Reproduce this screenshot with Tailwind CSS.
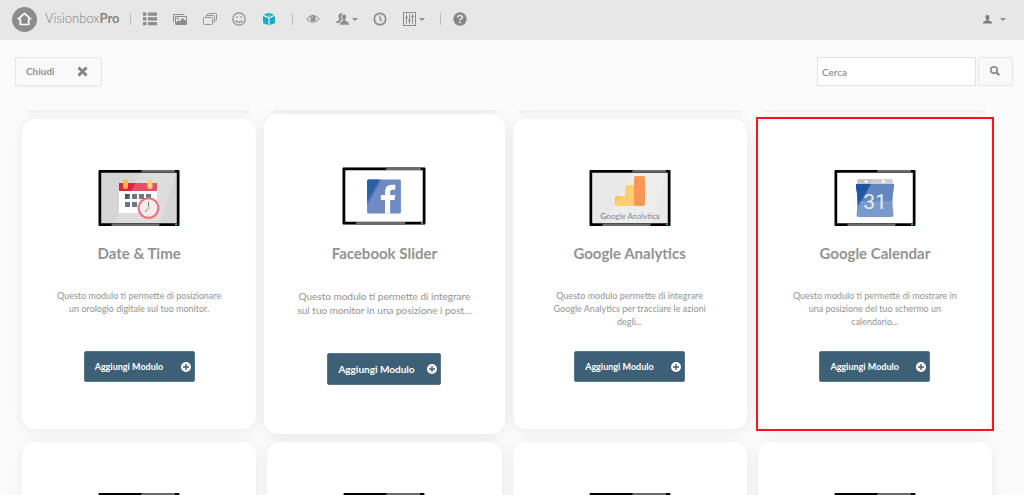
<!DOCTYPE html>
<html lang="it">
<head>
<meta charset="utf-8">
<meta name="viewport" content="width=device-width, initial-scale=1">
<title>VisionboxPro</title>
<script src="https://cdn.jsdelivr.net/npm/@tailwindcss/browser@4"></script>
</head>
<body class="h-screen overflow-hidden flex flex-col bg-[#fbfbfb] font-['Lato',sans-serif] text-[#939393]">

<svg class="hidden" aria-hidden="true">
  <symbol id="frame" viewBox="0 0 82 56">
    <path fill="#000" fill-rule="evenodd" d="M1.500 0h79q1 0 1 1v54q0 1-1 1h-79q-1 0-1-1V1q0-1 1-1zM3.200 2.800v50.400h75.600V2.800z"/>
    <path fill="#fff" fill-opacity=".2" d="M43 3h35L62 53H16z"/>
    <path fill="#6a6a6a" d="M44 0h33v2.500H42.500zM14 53.500h48l-1 2.500H13z"/>
    <circle cx="78" cy="54.500" r="1" fill="#1db4e8"/>
  </symbol>
  <symbol id="plus" viewBox="0 0 10 10">
    <circle cx="5" cy="5" r="5" fill="#fff"/>
    <path d="M5 2v6M2 5h6" stroke="#3d6077" stroke-width="1.400"/>
  </symbol>
  <symbol id="caret" viewBox="0 0 6 3"><path fill="currentColor" d="M0 0h6L3 3z"/></symbol>
</svg>

<header class="h-10 shrink-0 bg-[#e7e7e7] flex items-center pl-3 pr-[18px] pb-0.5">
  <a href="#" class="flex items-center gap-2" aria-label="VisionboxPro">
    <svg class="size-[25px]" viewBox="0 0 25 25" fill="none"><circle cx="12.500" cy="12.500" r="12.500" fill="#8c8c8c"/><path d="M5.800 12.400 12.500 6.300l6.700 6.100M8.300 11.500v6h8.400v-6" stroke="#fff" stroke-width="1.700"/></svg>
    <span class="text-[13px] font-light text-[#7c7c7c]">Visionbox<b class="font-bold text-[#858585]">Pro</b></span>
  </a>
  <span class="w-px h-3 bg-[#bdbdbd] ml-[10px]"></span>
  <nav class="flex items-center flex-1" aria-label="Principale">
    <a href="#" class="ml-3" aria-label="Elenco"><svg class="w-[14px] h-[14px]" viewBox="0 0 14 14" fill="#8c8c8c"><path d="M0 .5h3.500v3.300H0zM5 .5h9v3.300H5zM0 5.300h3.500v3.300H0zM5 5.300h9v3.300H5zM0 10h3.500v3.300H0zM5 10h9v3.300H5z"/></svg></a>
    <a href="#" class="ml-4" aria-label="Immagini"><svg class="w-[14px] h-[14px]" viewBox="0 0 14 14" fill="none" stroke="#8c8c8c"><path d="M.5 10V2.500h11M2.500 4.500h11v8h-11z"/><path d="M3 12v-1.500l2-2 1.500 1 3-3.500L13 9v3z" fill="#8c8c8c" stroke="none"/><circle cx="4.800" cy="6.500" r="1" fill="#8c8c8c" stroke="none"/></svg></a>
    <a href="#" class="ml-4" aria-label="Livelli"><svg class="w-[14px] h-[14px]" viewBox="0 0 14 14" fill="none" stroke="#949494"><rect x=".5" y="5.500" width="9" height="7" rx="1"/><path d="M2.500 5V4.500q0-1 1-1h7q1 0 1 1v5q0 1-1 1H10M4.500 3.500v-1q0-1 1-1h7q1 0 1 1v5q0 1-1 1h-1"/></svg></a>
    <a href="#" class="ml-[15px]" aria-label="Emozioni"><svg class="size-[14px]" viewBox="0 0 14 14" fill="none" stroke="#8c8c8c" stroke-width="1.200"><circle cx="7" cy="7" r="6.200"/><path d="M3.500 8.500q3.500 3.800 7 0"/><ellipse cx="5" cy="5" rx=".7" ry="1.100" fill="#8c8c8c" stroke="none"/><ellipse cx="9" cy="5" rx=".7" ry="1.100" fill="#8c8c8c" stroke="none"/></svg></a>
    <a href="#" class="ml-4" aria-label="Moduli"><svg class="size-[14px]" viewBox="0 0 14 14" fill="#0fb0c8"><path d="m7 .8 5.300 2L7 5 1.700 2.800zM1 4l5.400 2.300v7L1 11zM13 4 7.600 6.300v7L13 11z"/><path d="m4.500 2.900 2.500-.9 2.500.9-2.500.9z" fill="#5fcad9"/></svg></a>
    <span class="w-px h-3 bg-[#bdbdbd] ml-4"></span>
    <a href="#" class="ml-[13px]" aria-label="Anteprima"><svg class="w-[14px] h-[14px]" viewBox="0 0 14 14" fill="none" stroke="#8c8c8c"><path d="M.8 7Q7-.2 13.200 7 7 13.500.8 7z"/><circle cx="7" cy="6.500" r="2.700" fill="#8c8c8c" stroke="none"/><path d="M5.600 6.300q.1-1.200 1.300-1.300" stroke="#e7e7e7" stroke-width=".8"/></svg></a>
    <button type="button" class="ml-4 flex items-center gap-[3px] text-[#8c8c8c]" aria-label="Utenti"><svg class="w-[13px] h-[14px]" viewBox="0 0 13 14" fill="#8c8c8c"><path d="M3.500 11H0q0-1.500 1.500-2l1.700-.8V7Q2.300 5.500 2.500 3.500 2.900 1 5 1q1.200 0 1.700.8Q5 2.700 5 5q0 1.500 1 3-2.200 1-2.500 3z"/><path d="M8 2.500c3 0 2.500 3.500 1.200 5v1.200l2.300 1q1.500.6 1.500 3H4q0-2.400 1.500-3l1.500-.8V7.500C5.500 6 5.500 2.500 8 2.500z"/></svg><svg class="w-[6px] h-[3px]"><use href="#caret"/></svg></button>
    <a href="#" class="ml-[15px]" aria-label="Pianificazione"><svg class="size-[14px]" viewBox="0 0 14 14" fill="none" stroke="#8c8c8c" stroke-width="1.700"><circle cx="7" cy="7" r="5.700"/><path d="M7 3.500V7.200l2 2" stroke-width="1.300"/></svg></a>
    <button type="button" class="ml-4 flex items-center gap-[3px] text-[#8c8c8c]" aria-label="Impostazioni"><svg class="w-[13px] h-[14px]" viewBox="0 0 13 14" fill="none" stroke="#8c8c8c"><rect x=".5" y=".5" width="12" height="13"/><path d="M3.500 2v10M6.500 2v10M9.500 2v10" stroke-width=".9"/><path d="M2.200 5.500h2.600M5.200 8.500h2.600M8.200 4.500h2.600" stroke-width="1.600"/></svg><svg class="w-[6px] h-[3px]"><use href="#caret"/></svg></button>
    <span class="w-px h-3 bg-[#bdbdbd] ml-[15px]"></span>
    <a href="#" class="ml-3" aria-label="Aiuto"><svg class="size-[14px]" viewBox="0 0 14 14" fill="none"><circle cx="7" cy="7" r="6.700" fill="#868686"/><path d="M4.700 5.500q.1-2 2.300-2 2.300 0 2.300 1.800 0 1-1.200 1.600Q7 7.400 7 8.600M7 9.500v1.700" stroke="#e7e7e7" stroke-width="1.700"/></svg></a>
  </nav>
  <button type="button" class="flex items-center gap-2 text-[#8c8c8c]" aria-label="Account"><svg class="w-[9px] h-[9px]" viewBox="0 0 9 9" fill="#7c7c7c"><path d="M4.500 0c2.700 0 2.300 3.200 1 4.700v.8l2.300.8Q9 6.800 9 8.500H0q0-1.700 1.200-2.200l2.300-.8v-.8C2.200 3.200 1.800 0 4.500 0z"/></svg><svg class="w-[6px] h-[3px]"><use href="#caret"/></svg></button>
</header>

<main class="flex-1 min-h-0 flex flex-col">
  <div class="flex items-center justify-between pl-[15px] pr-[11px] pt-[17px] pb-6">
    <button type="button" class="h-[29px] w-[87px] flex items-center justify-between pl-[10px] pr-[13px] border border-[#e8e8e8] rounded-xs bg-[#fafafa] text-[10px] font-bold shadow-xs">Chiudi
      <svg class="size-[11px]" viewBox="0 0 11 11" stroke="#858585" stroke-width="3"><path d="m1.500 1.500 8 8M9.500 1.500l-8 8"/></svg>
    </button>
    <form class="flex gap-0.5" role="search">
      <input type="search" aria-label="Cerca" placeholder="Cerca" class="h-[29px] w-[159px] border border-[#e2e2e2] bg-white px-1 text-[10px] font-medium placeholder:text-[#8a8a8a] outline-none">
      <button type="button" aria-label="Avvia ricerca" class="h-[29px] w-[35px] flex items-center justify-center border border-[#e6e6e6] rounded-xs bg-[#f9f9f9] pb-px pr-px"><svg class="size-[10px]" viewBox="0 0 10 10" fill="none" stroke="#858585"><circle cx="4" cy="4" r="3.200" stroke-width="1.500"/><path d="m6.300 6.300 3 3" stroke-width="2"/></svg></button>
    </form>
  </div>

  <section class="flex-1 min-h-0 overflow-hidden pl-[22px] pr-8" aria-label="Moduli">
    <div class="grid grid-cols-4 gap-x-[23px] px-1.5 h-[9px]" aria-hidden="true">
      <div class="bg-linear-to-b from-black/4 to-transparent h-1.5"></div><div class="bg-linear-to-b from-black/4 to-transparent h-1.5"></div><div class="bg-linear-to-b from-black/4 to-transparent h-1.5"></div><div class="bg-linear-to-b from-black/4 to-transparent h-1.5"></div>
    </div>
    <div class="grid grid-cols-4 gap-x-[11px] gap-y-[13px]">

      <article class="flex flex-col items-center text-center bg-white rounded-[13px] shadow-[0_2px_14px_rgba(0,0,0,0.07)] pt-[51px] pb-[47px] px-[30px]">
        <svg class="w-[82px] h-[56px]" viewBox="0 0 82 56" role="img" aria-label="Calendario e orologio">
          <path fill="#d5d5d5" d="M1 1h80v54H1z"/>
          <path fill="#fff" d="M21 20h38v23H21z"/><path fill="#e3223f" d="M21 13h38v8H21z"/>
          <path fill="#465764" d="M27 24h5v5h-5zM34 24h5v5h-5zM41 24h5v5h-5zM48 24h5v5h-5zM27 32h5v5h-5zM34 32h5v5h-5z"/>
          <rect x="25" y="9" width="5" height="10" rx="2.500" fill="#f7bd45"/><rect x="49.500" y="9" width="5" height="10" rx="2.500" fill="#fcc557"/>
          <circle cx="50.500" cy="38" r="9.800" fill="#ececec" stroke="#ee4b53" stroke-width="2"/>
          <path d="M50.500 32v6l-3.500 4" stroke="#465764" fill="none"/><circle cx="50.500" cy="38" r="1.800" fill="#fcc557"/>
          <use href="#frame"/>
        </svg>
        <h2 class="mt-[15px] text-[15px] leading-6 font-bold whitespace-nowrap">Date &amp; Time</h2>
        <p class="mt-6 h-[40px] text-[9px] leading-[13px]">Questo modulo ti permette di posizionare un orologio digitale sul tuo monitor.</p>
        <button type="button" class="mt-[22px] h-[31px] w-[111px] rounded-xs border border-[#587689] bg-[#3d6077] text-white text-[9px] font-bold flex items-center justify-between pl-[10px] pr-[3px]">Aggiungi Modulo<svg class="size-[10px]"><use href="#plus"/></svg></button>
      </article>

      <article class="-mx-[3px] -my-[5px] z-10 flex flex-col items-center text-center bg-white rounded-[14px] shadow-[0_2px_14px_rgba(0,0,0,0.08)] pt-[53px] pb-[48px] px-[30px]">
        <svg class="w-[84px] h-[58px]" viewBox="0 0 82 56" role="img" aria-label="Facebook">
          <path fill="#fff" d="M1 1h80v54H1z"/>
          <rect x="24.500" y="12" width="33" height="33" rx="1.500" fill="#4a6fb4"/><path fill="#285fa9" d="M25.500 12h11l-12 21V13z"/>
          <path fill="#fff" d="M42 45V32h-4v-5h4v-3.500q0-6.500 6.500-6.500H52v5h-2.500q-2.500 0-2.500 2.500V27h5l-.7 5H47v13z"/>
          <use href="#frame"/>
        </svg>
        <h2 class="mt-4 text-[15px] leading-6 font-bold whitespace-nowrap">Facebook Slider</h2>
        <p class="mt-6 h-[42px] text-[10px] leading-[14px]">Questo modulo ti permette di integrare sul tuo monitor in una posizione i post...</p>
        <button type="button" class="mt-[22px] h-[32px] w-[114px] rounded-xs border border-[#587689] bg-[#3d6077] text-white text-[10px] font-bold flex items-center justify-between pl-[10px] pr-[3px]">Aggiungi Modulo<svg class="size-[10px]"><use href="#plus"/></svg></button>
      </article>

      <article class="flex flex-col items-center text-center bg-white rounded-[13px] shadow-[0_2px_14px_rgba(0,0,0,0.07)] pt-[51px] pb-[47px] px-[30px]">
        <svg class="w-[82px] h-[56px]" viewBox="0 0 82 56" role="img" aria-label="Google Analytics">
          <path fill="#e9e9e9" d="M1 1h80v54H1z"/>
          <path fill="#fdc34d" d="M28 26h8v-9q0-2 2-2h9v21H28q-2 0-2-2v-6q0-2 2-2z"/><rect x="45" y="6" width="11" height="30" rx="2" fill="#f57f2d"/>
          <text x="41" y="49" text-anchor="middle" font-family="Lato, sans-serif" font-size="8" fill="#6c6c6c">Google Analytics</text>
          <use href="#frame"/>
        </svg>
        <h2 class="mt-[15px] text-[15px] leading-6 font-bold whitespace-nowrap">Google Analytics</h2>
        <p class="mt-6 h-[40px] text-[9px] leading-[13px]">Questo modulo permette di integrare Google Analytics per tracciare le azioni degli...</p>
        <button type="button" class="mt-[22px] h-[31px] w-[111px] rounded-xs border border-[#587689] bg-[#3d6077] text-white text-[9px] font-bold flex items-center justify-between pl-[10px] pr-[3px]">Aggiungi Modulo<svg class="size-[10px]"><use href="#plus"/></svg></button>
      </article>

      <article class="relative flex flex-col items-center text-center bg-white rounded-[13px] shadow-[0_2px_14px_rgba(0,0,0,0.07)] pt-[51px] pb-[47px] px-[30px]">
        <span class="absolute -inset-0.5 border-2 border-[#ff1020] pointer-events-none"></span>
        <svg class="w-[82px] h-[56px]" viewBox="0 0 82 56" role="img" aria-label="Google Calendar">
          <path fill="#fff" d="M1 1h80v54H1z"/>
          <path fill="#c5c5c5" d="M25 9h32q2 0 2 2v4H23v-4q0-2 2-2z"/><circle cx="32" cy="11.500" r="1.400" fill="#fff"/><circle cx="49.500" cy="11.500" r="1.400" fill="#fff"/>
          <path fill="#3d67b1" d="M22 14h38v3q-1.500 7-1.500 14H23.500q0-7-1.500-14z"/><path fill="#5781c2" d="M23.500 31h35q0 7 1 14 0 2-2 2h-33q-2 0-2-2 1-7 1-14z"/><path fill="#2056a0" d="M22 14h15L23.500 35v-4q0-7-1.500-14z"/>
          <text x="41" y="39" text-anchor="middle" font-family="Roboto, sans-serif" font-weight="400" font-size="21" fill="#e4e9f2">31</text>
          <use href="#frame"/>
        </svg>
        <h2 class="mt-[15px] text-[15px] leading-6 font-bold whitespace-nowrap">Google Calendar</h2>
        <p class="mt-6 h-[40px] text-[9px] leading-[13px]">Questo modulo ti permette di mostrare in una posizione del tuo schermo un calendario...</p>
        <button type="button" class="mt-[22px] h-[31px] w-[111px] rounded-xs border border-[#587689] bg-[#3d6077] text-white text-[9px] font-bold flex items-center justify-between pl-[10px] pr-[3px]">Aggiungi Modulo<svg class="size-[10px]"><use href="#plus"/></svg></button>
      </article>

      <article class="flex justify-center bg-white rounded-[13px] shadow-[0_2px_14px_rgba(0,0,0,0.07)] pt-[51px] pb-[203px]"><svg class="w-[82px] h-[56px]"><use href="#frame"/></svg></article>
      <article class="flex justify-center bg-white rounded-[13px] shadow-[0_2px_14px_rgba(0,0,0,0.07)] pt-[51px] pb-[203px]"><svg class="w-[82px] h-[56px]"><use href="#frame"/></svg></article>
      <article class="flex justify-center bg-white rounded-[13px] shadow-[0_2px_14px_rgba(0,0,0,0.07)] pt-[51px] pb-[203px]"><svg class="w-[82px] h-[56px]"><use href="#frame"/></svg></article>
      <article class="flex justify-center bg-white rounded-[13px] shadow-[0_2px_14px_rgba(0,0,0,0.07)] pt-[51px] pb-[203px]"><svg class="w-[82px] h-[56px]"><use href="#frame"/></svg></article>
    </div>
  </section>
</main>
</body>
</html>
